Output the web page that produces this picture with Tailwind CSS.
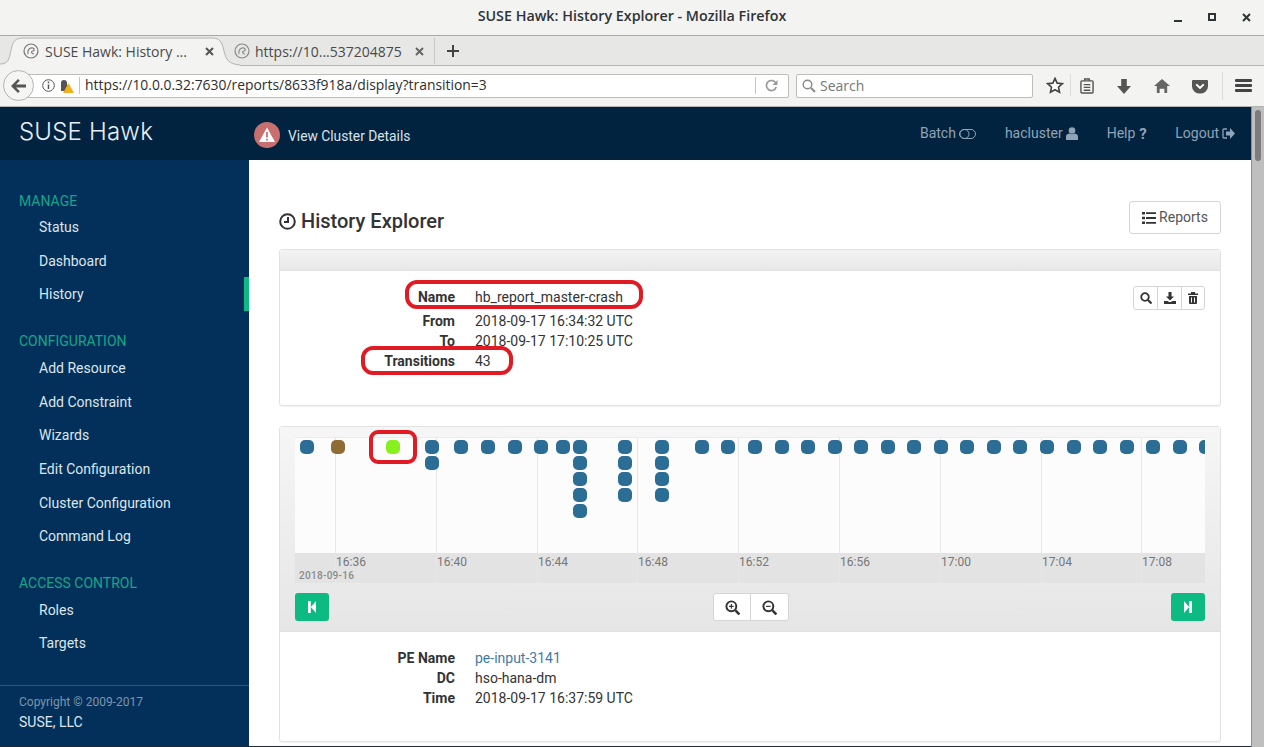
<!DOCTYPE html>
<html lang="en">
<head>
    <meta charset="UTF-8">
    <meta name="viewport" content="width=device-width, initial-scale=1.0">
    <title>SUSE Hawk: History Explorer</title>
    <script src="https://cdn.jsdelivr.net/npm/@tailwindcss/browser@4"></script>
</head>
<body class="h-screen w-screen overflow-hidden flex flex-col bg-white font-['Roboto',sans-serif] text-[14px] text-[#333]">
    <!-- title bar -->
    <div class="h-[36px] shrink-0 relative flex items-center justify-center bg-[#f3f3f2] border-b border-[#a9a9a7] font-['Open_Sans',sans-serif] font-semibold text-[14.3px] text-[#2e3436]">
        <span class="-mt-[3px]">SUSE Hawk: History Explorer - Mozilla Firefox</span>
        <div class="absolute right-[13px] top-[13px] flex items-start gap-[26px]">
            <div class="w-[8px] h-[2px] bg-[#2e3436] mt-[7px]"></div>
            <div class="w-[8px] h-[8px] border-2 border-[#2e3436]"></div>
            <svg width="9" height="9" viewBox="0 0 9 9"><path d="M1 1l7 7M8 1L1 8" stroke="#2e3436" stroke-width="2"/></svg>
        </div>
    </div>
    <!-- tab strip -->
    <div class="h-[30px] shrink-0 relative flex items-center bg-[#e7e7e6] border-b border-[#b4b4b2] font-['Open_Sans',sans-serif] text-[#4a4a4a]">
        <svg width="240" height="30" viewBox="0 0 240 30" class="absolute left-0 top-0">
            <path d="M0 28 C8 28 9 24 11 14 C13 5 15 2 24 2 L212 2 C220 2 222 6 224 15 C226 24 229 28 240 29 L240 30 L0 30 Z" fill="#f3f3f2"/>
            <path d="M0 28 C8 28 9 24 11 14 C13 5 15 2 24 2 L212 2 C220 2 222 6 224 15 C226 24 229 28 240 29" fill="none" stroke="#b4b4b2"/>
        </svg>
        <div class="relative flex items-center h-full pl-[23px] pt-px">
            <svg width="16" height="16" viewBox="0 0 16 16" fill="none" stroke="#777" stroke-width="1.2"><circle cx="8" cy="8" r="7"/><path d="M5 11c-1-4 2-7 5-6 2 1 1 3 0 3-2 0-2 3 1 3"/></svg>
            <span class="ml-[6px] w-[153px] whitespace-nowrap">SUSE Hawk: History ...</span>
            <svg width="9" height="9" viewBox="0 0 9 9" class="ml-[7px]"><path d="M1 1l7 7M8 1L1 8" stroke="#555" stroke-width="2"/></svg>
            <svg width="16" height="16" viewBox="0 0 16 16" fill="none" stroke="#888" stroke-width="1.2" class="ml-[20px]"><circle cx="8" cy="8" r="7"/><path d="M5 11c-1-4 2-7 5-6 2 1 1 3 0 3-2 0-2 3 1 3"/></svg>
            <span class="ml-[5px] w-[160px] whitespace-nowrap">https://10...537204875</span>
            <svg width="9" height="9" viewBox="0 0 9 9"><path d="M1 1l7 7M8 1L1 8" stroke="#666" stroke-width="2"/></svg>
            <div class="w-px h-[26px] bg-[#c8c8c6] ml-[10px]"></div>
            <svg width="12" height="12" viewBox="0 0 12 12" class="ml-[12px]"><path d="M6 0v12M0 6h12" stroke="#444" stroke-width="2"/></svg>
        </div>
    </div>
    <!-- nav bar -->
    <div class="h-[41px] shrink-0 relative flex items-center bg-[#f3f3f2] border-b border-[#b4b4b2] font-['Open_Sans',sans-serif] text-[14px]">
        <div class="ml-[18px] h-[24px] w-[771px] -mt-[1px] flex items-center bg-white border border-[#bdbdbb] rounded-r-[2px]">
            <svg width="13" height="13" viewBox="0 0 13 13" fill="none" class="ml-[23px]"><circle cx="6.5" cy="6.5" r="5.8" stroke="#555"/><path d="M6.5 5.5v4.5M6.5 2.6v1.6" stroke="#555" stroke-width="1.5"/></svg>
            <svg width="15" height="15" viewBox="0 0 15 15" class="ml-[4px]"><path d="M2 7V5a3 3 0 0 1 6 0v2h1v6H2z" fill="#555"/><path d="M9.5 5L15 15H4z" fill="#f2b01e"/></svg>
            <div class="w-px h-[17px] bg-[#c4c4c4] ml-[5px]"></div>
            <span class="ml-[5px] text-[13.9px] text-[#2e2e2e] w-[670px] whitespace-nowrap">https://10.0.0.32:7630/reports/8633f918a/display?transition=3</span>
            <div class="w-px h-[17px] bg-[#c4c4c4]"></div>
            <svg width="13" height="13" viewBox="0 0 13 13" fill="none" class="ml-[9px]"><path d="M11 4.5A5 5 0 1 0 11.2 8" stroke="#999" stroke-width="1.7"/><path d="M12.5 1v5h-5z" fill="#999"/></svg>
        </div>
        <div class="ml-[7px] h-[24px] w-[237px] -mt-[1px] flex items-center bg-white border border-[#bdbdbb] rounded-[2px] text-[#777]">
            <svg width="14" height="14" viewBox="0 0 14 14" fill="none" class="ml-[5px]"><circle cx="5.5" cy="5.5" r="4.3" stroke="#888" stroke-width="1.4"/><path d="M9 9l4 4" stroke="#888" stroke-width="2"/></svg>
            <span class="ml-[4px]">Search</span>
        </div>
        <!-- back button overlaps the url bar -->
        <div class="absolute left-[3px] top-[4px] w-[31px] h-[31px] rounded-full bg-[#f5f5f4] border border-[#b4b4b2] flex items-center justify-center">
            <svg width="15" height="14" viewBox="0 0 15 14"><path d="M7 0l1.800 1.800L5 5.500h10v3H5l3.800 3.700L7 14 0 7z" fill="#555"/></svg>
        </div>
        <div class="absolute left-0 top-0 h-full w-[1264px] pointer-events-none">
            <svg width="18" height="17" viewBox="0 0 18 18" class="absolute left-[1046px] top-[11px]"><path d="M9 1.500l2.300 5 5.400.6-4 3.700 1.100 5.400L9 13.500l-4.800 2.700 1.100-5.400-4-3.700 5.400-.6z" fill="#fff" stroke="#444" stroke-width="1.700"/></svg>
            <div class="absolute left-[1070px] top-[8px] w-px h-[22px] bg-[#dcdcda]"></div>
            <svg width="14" height="16" viewBox="0 0 15 17" class="absolute left-[1080px] top-[12px]" fill="none" stroke="#555" stroke-width="1.500"><rect x="1" y="3" width="13" height="13" rx="1"/><path d="M5 3V1h5v2M4 7h7M4 10h7M4 13h7"/></svg>
            <svg width="14" height="15" viewBox="0 0 15 17" preserveAspectRatio="none" class="absolute left-[1117px] top-[13px]"><path d="M4.500 0h6v8H15l-7.500 9L0 8h4.500z" fill="#555"/></svg>
            <svg width="16" height="14" viewBox="0 0 17 16" preserveAspectRatio="none" class="absolute left-[1154px] top-[13px]"><path d="M8.500 0L17 8h-3v8h-3v-5H6v5H3V8H0z" fill="#666"/></svg>
            <svg width="16" height="14" viewBox="0 0 17 16" preserveAspectRatio="none" class="absolute left-[1192px] top-[14px]"><path d="M1 0h15a1 1 0 0 1 1 1v6a8.500 8.500 0 0 1-17 0V1a1 1 0 0 1 1-1z" fill="#555"/><path d="M4.500 5l4 4 4-4" fill="none" stroke="#fff" stroke-width="2.200"/></svg>
            <div class="absolute left-[1222px] top-[6px] w-px h-[28px] bg-[#dcdcda]"></div>
            <div class="absolute left-[1235px] top-[13px] w-[17px] flex flex-col gap-[2px]">
                <div class="h-[3px] bg-[#444] rounded-[1px]"></div>
                <div class="h-[3px] bg-[#444] rounded-[1px]"></div>
                <div class="h-[3px] bg-[#444] rounded-[1px]"></div>
            </div>
        </div>
    </div>
    <!-- page -->
    <div class="flex-1 min-h-0 flex">
        <div class="flex-1 min-w-0 flex flex-col">
            <header class="h-[53px] shrink-0 flex items-center bg-[#02233f] text-[#8fa4b6]">
                <div class="w-[249px] pl-[19px] pb-[4px] font-['Inter',sans-serif] font-light text-[24px] tracking-[0.2px] text-[#e6eef4]">SUSE Hawk</div>
                <svg width="26" height="26" viewBox="0 0 26 26" class="ml-[5px] mt-[2px]"><circle cx="13" cy="13" r="13" fill="#c8706f"/><path d="M13 5.500L21 20H5z" fill="#fff"/><path d="M13 10v5.500M13 16.800v1.700" stroke="#c8706f" stroke-width="1.800"/></svg>
                <span class="ml-[8px] mt-[5px] text-[13.8px] text-[#d8e2ea]">View Cluster Details</span>
                <nav class="ml-auto mr-[16px] flex items-center">
                    <span>Batch</span>
                    <svg width="17" height="10" viewBox="0 0 17 10" fill="none" stroke="#8fa4b6" class="ml-[3px]"><rect x="0.500" y="0.500" width="16" height="9" rx="4.500"/><circle cx="5.500" cy="5" r="4.500"/></svg>
                    <span class="ml-[29px]">hacluster</span>
                    <svg width="12" height="13" viewBox="0 0 12 13" fill="#8fa4b6" class="ml-[3px]"><circle cx="6" cy="3.500" r="3.300"/><path d="M0 13V9.500C0 7.500 2 6.500 3.500 6.500c1.500 1 3.500 1 5 0C10 6.500 12 7.500 12 9.500V13z"/></svg>
                    <span class="ml-[29px]">Help</span>
                    <span class="ml-[4px] w-[7px] font-bold text-[15px] leading-[14px]">?</span>
                    <span class="ml-[29px]">Logout</span>
                    <svg width="13" height="11" viewBox="0 0 13 11" class="ml-[3px]"><path d="M5 1H2a1 1 0 0 0-1 1v7a1 1 0 0 0 1 1h3" fill="none" stroke="#8fa4b6" stroke-width="1.300"/><path d="M4 3.500h4V0l5 5.500-5 5.500V7.500H4z" fill="#8fa4b6"/></svg>
                </nav>
            </header>
            <div class="flex-1 min-h-0 flex border-b border-[#1d2b38]">
                <!-- sidebar -->
                <aside class="w-[249px] shrink-0 flex flex-col bg-[#03305a] text-[#dce5ec] pt-[33px]">
                    <h4 class="h-4 leading-4 mb-px pl-[19px] text-[#17a589]">MANAGE</h4>
                    <a class="h-[33.7px] flex items-center pl-[39px] pt-[1.5px]">Status</a>
                    <a class="h-[33.7px] flex items-center pl-[39px] pt-[1.5px]">Dashboard</a>
                    <a class="h-[33.7px] flex items-center pl-[39px] pt-[1.5px] border-r-[5px] border-[#0dba82]">History</a>
                    <h4 class="h-4 leading-4 mt-[22px] mb-[2px] pl-[19px] text-[#17a589]">CONFIGURATION</h4>
                    <a class="h-[33.7px] flex items-center pl-[39px] pt-[1.5px]">Add Resource</a>
                    <a class="h-[33.7px] flex items-center pl-[39px] pt-[1.5px]">Add Constraint</a>
                    <a class="h-[33.7px] flex items-center pl-[39px]">Wizards</a>
                    <a class="h-[33.7px] flex items-center pl-[39px] pt-[1.5px]">Edit Configuration</a>
                    <a class="h-[33.7px] flex items-center pl-[39px] pt-[1.5px]">Cluster Configuration</a>
                    <a class="h-[33.7px] flex items-center pl-[39px]">Command Log</a>
                    <h4 class="h-4 leading-4 mt-[22px] mb-[2px] pl-[19px] text-[#17a589]">ACCESS CONTROL</h4>
                    <a class="h-[33.7px] flex items-center pl-[39px]">Roles</a>
                    <a class="h-[33.7px] flex items-center pl-[39px]">Targets</a>
                    <div class="mt-auto h-[61px] border-t border-[#2f5578] pl-[19px] pt-[8px]">
                        <div class="text-[12px] leading-[16px] text-[#7d95aa]">Copyright © 2009-2017</div>
                        <div class="mt-[2px] leading-[20px]">SUSE, LLC</div>
                    </div>
                </aside>
                <!-- main -->
                <main class="flex-1 min-w-0 relative overflow-hidden pl-[30px] pr-[30px]">
                    <div class="flex items-start justify-between pt-[41px] h-[89px]">
                        <h1 class="mt-[6px] flex items-center gap-[5px] text-[20px] leading-[28px] font-medium text-[#333]">
                            <svg width="17" height="17" viewBox="0 0 17 17" fill="none" stroke="#333" stroke-width="2"><circle cx="8.500" cy="8.500" r="7.300"/><path d="M9 4v5H5"/></svg>
                            History Explorer
                        </h1>
                        <button class="h-[33px] w-[92px] flex items-center justify-center gap-[3px] border border-[#d5d5d5] rounded-[3px] bg-white text-[#555]">
                            <svg width="14" height="12" viewBox="0 0 14 12" fill="#333"><path d="M0 0h3v2.400H0zM0 4.800h3v2.400H0zM0 9.600h3V12H0zM4 .3h10v1.800H4zM4 5.100h10v1.800H4zM4 9.900h10v1.800H4z"/></svg>
                            Reports
                        </button>
                    </div>
                    <!-- report details -->
                    <section class="h-[157px] relative border border-[#e2e2e2] rounded-[3px] shadow-[0_1px_1px_rgba(0,0,0,0.06)]">
                        <div class="h-[21px] bg-gradient-to-b from-[#f3f3f3] to-[#e8e8e8] border-b border-[#e2e2e2]"></div>
                        <dl class="grid grid-cols-[175px_1fr] gap-x-[20px] pt-[16px] leading-[20px]">
                            <dt class="text-right font-bold mb-[4px]">Name</dt><dd class="text-[#333]">hb_report_master-crash</dd>
                            <dt class="text-right font-bold">From</dt><dd>2018-09-17 16:34:32 UTC</dd>
                            <dt class="text-right font-bold">To</dt><dd>2018-09-17 17:10:25 UTC</dd>
                            <dt class="text-right font-bold">Transitions</dt><dd>43</dd>
                        </dl>
                        <div class="absolute right-[15px] top-[36px] h-[24px] flex border border-[#d5d5d5] rounded-[3px] bg-white divide-x divide-[#d5d5d5]">
                            <div class="w-[24px] flex items-center justify-center">
                                <svg width="12" height="12" viewBox="0 0 12 12" fill="none" stroke="#333"><circle cx="5" cy="5" r="3.800" stroke-width="1.800"/><path d="M8 8l3.500 3.500" stroke-width="2.200"/></svg>
                            </div>
                            <div class="w-[24px] flex items-center justify-center">
                                <svg width="12" height="12" viewBox="0 0 12 12" fill="#333"><path d="M4.500 0h3v4.500H10L6 8.500 2 4.500h2.500zM0 9h3.500l1.500 1h2l1.500-1H12v3H0z"/></svg>
                            </div>
                            <div class="w-[22px] flex items-center justify-center">
                                <svg width="10" height="12" viewBox="0 0 10 12" fill="#333"><path d="M3 0h4v1.500h3v1.500H0V1.500h3zM1 4h8v7a1 1 0 0 1-1 1H2a1 1 0 0 1-1-1zM3 5.500v5h1v-5zM6 5.500v5h1v-5z" fill-rule="evenodd"/></svg>
                            </div>
                        </div>
                    </section>
                    <!-- timeline panel -->
                    <section class="mt-[20px] h-[316px] border border-[#e2e2e2] rounded-[3px] shadow-[0_1px_1px_rgba(0,0,0,0.06)]">
                        <div class="h-[205px] bg-gradient-to-b from-[#f6f6f6] to-[#e6e6e6] border-b border-[#e0e0e0] pt-[10px] px-[15px]">
                            <div id="timeline" class="h-[146px] relative overflow-hidden bg-[#fcfcfc] border-t border-[#ececec]">
                                <div class="absolute left-0 right-0 bottom-0 h-[30px] bg-[#e3e3e3]"></div>
                                <div class="absolute z-10 left-[4px] top-[132px] text-[10px] leading-[12px] font-medium tracking-[0.3px] text-[#8a8a8a]">2018-09-16</div>
                            </div>
                            <div class="mt-[10px] flex items-center justify-between">
                                <button class="w-[34px] h-[28px] flex items-center justify-center rounded-[3px] bg-[#0dba82]">
                                    <svg width="8" height="12" viewBox="0 0 8 11" preserveAspectRatio="none" fill="#fff"><path d="M0 0h2.800v11H0zM8 0v11L2.800 5.500z"/></svg>
                                </button>
                                <div class="ml-[2px] h-[28px] flex bg-white border border-[#d5d5d5] rounded-[3px] divide-x divide-[#d5d5d5]">
                                    <div class="w-[37px] flex items-center justify-center">
                                        <svg width="15" height="15" viewBox="0 0 13 13" fill="none" stroke="#333"><circle cx="5.500" cy="5.500" r="4.300" stroke-width="1.700"/><path d="M9 9l3.500 3.500" stroke-width="2.200"/><path d="M3.500 5.500h4M5.500 3.500v4"/></svg>
                                    </div>
                                    <div class="w-[37px] flex items-center justify-center">
                                        <svg width="15" height="15" viewBox="0 0 13 13" fill="none" stroke="#333"><circle cx="5.500" cy="5.500" r="4.300" stroke-width="1.700"/><path d="M9 9l3.500 3.500" stroke-width="2.200"/><path d="M3.500 5.500h4"/></svg>
                                    </div>
                                </div>
                                <button class="w-[34px] h-[28px] flex items-center justify-center rounded-[3px] bg-[#0dba82]">
                                    <svg width="8" height="12" viewBox="0 0 8 11" preserveAspectRatio="none" fill="#fff"><path d="M8 0H5.200v11H8zM0 0v11l5.200-5.500z"/></svg>
                                </button>
                            </div>
                        </div>
                        <dl class="grid grid-cols-[175px_1fr] gap-x-[20px] pt-[16px] leading-[20px]">
                            <dt class="text-right font-bold">PE Name</dt><dd class="text-[#3f7ba8]">pe-input-3141</dd>
                            <dt class="text-right font-bold">DC</dt><dd>hso-hana-dm</dd>
                            <dt class="text-right font-bold">Time</dt><dd>2018-09-17 16:37:59 UTC</dd>
                        </dl>
                    </section>
                    <!-- red annotations drawn over the screenshot -->
                    <div class="absolute left-[156px] top-[120px] w-[238px] h-[29px] border-[4px] border-[#e01b24] rounded-[12px]"></div>
                    <div class="absolute left-[112px] top-[186px] w-[152px] h-[29px] border-[4px] border-[#e01b24] rounded-[12px]"></div>
                    <div class="absolute left-[120px] top-[270px] w-[48px] h-[34px] border-[4px] border-[#e01b24] rounded-[9px]"></div>
                </main>
            </div>
        </div>
        <!-- scrollbar -->
        <div class="w-[13px] shrink-0 bg-[#bfbfbf] border-l border-[#8d8d8d] relative">
            <div class="absolute left-[3px] top-[3px] w-[6px] h-[51px] rounded-[3px] bg-[#7c7c7c]"></div>
        </div>
    </div>
    <script>
        // positions are relative to the timeline's left edge (x=295)
        var grid = [[40, '16:36'], [141, '16:40'], [242, '16:44'], [342, '16:48'], [443, '16:52'], [544, '16:56'], [645, '17:00'], [746, '17:04'], [846, '17:08']];
        var dots = [[5, 1], [36, 1, 'brown'], [91, 1, 'green'], [130, 2], [159, 1], [186, 1], [213, 1], [239, 1], [261, 1], [278, 5], [323, 4], [360, 4], [400, 1], [426, 1], [453, 1], [480, 1], [506, 1], [533, 1], [559, 1], [586, 1], [612, 1], [639, 1], [665, 1], [692, 1], [718, 1], [745, 1], [772, 1], [798, 1], [825, 1], [851, 1], [878, 1], [904, 1]];
        var colors = { brown: 'bg-[#8f6b35]', green: 'bg-[#88f01f]' };
        var timeline = document.getElementById('timeline');

        grid.forEach(function (g) {
            var line = document.createElement('div');
            line.className = 'absolute top-0 bottom-0 w-px bg-[#e6e6e6]';
            line.style.left = g[0] + 'px';
            timeline.appendChild(line);
            var label = document.createElement('div');
            label.className = 'absolute top-[116px] text-[12px] leading-[16px] text-[#777]';
            label.style.left = (g[0] + 1) + 'px';
            label.textContent = g[1];
            timeline.appendChild(label);
        });

        dots.forEach(function (d) {
            for (var i = 0; i < d[1]; i++) {
                var dot = document.createElement('div');
                dot.className = 'absolute w-[14px] h-[14px] rounded-[5px] ' + (colors[d[2]] || 'bg-[#2b6d94]');
                dot.style.left = d[0] + 'px';
                dot.style.top = (2 + i * 16) + 'px';
                timeline.appendChild(dot);
            }
        });
    </script>
</body>
</html>
